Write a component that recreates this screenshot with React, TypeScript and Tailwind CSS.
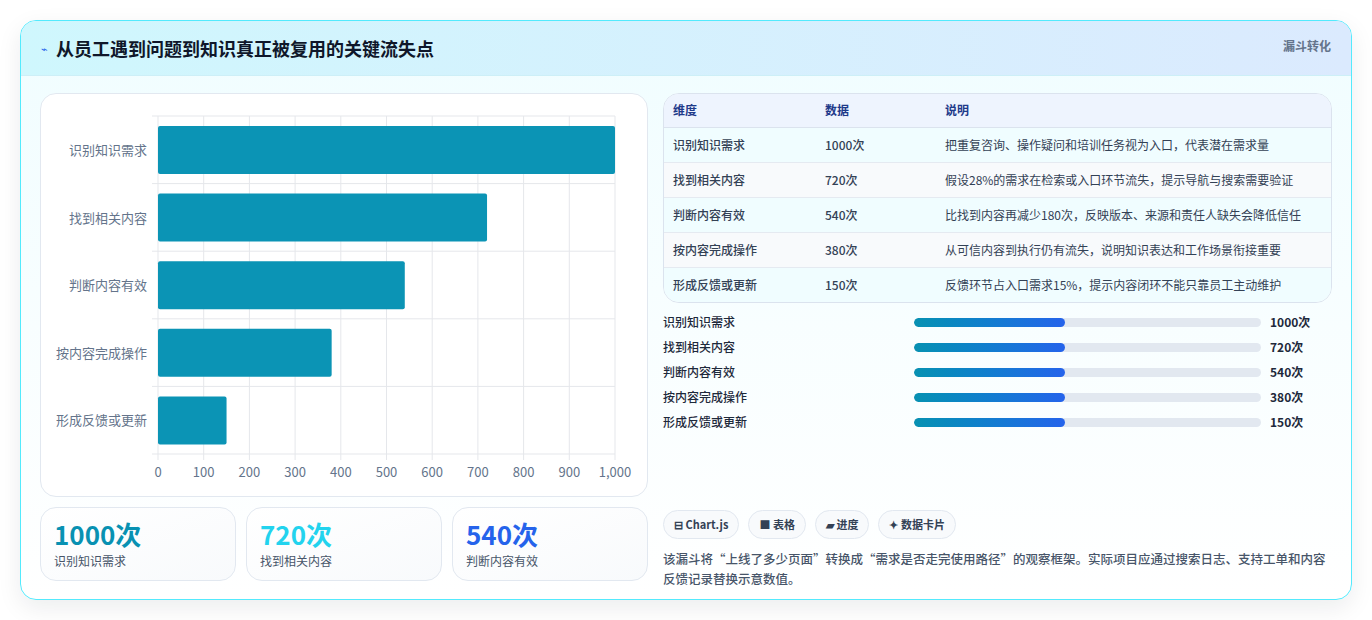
const rows = [
  { name: "识别知识需求", v: 1000, note: "把重复咨询、操作疑问和培训任务视为入口，代表潜在需求量" },
  { name: "找到相关内容", v: 720, note: "假设28%的需求在检索或入口环节流失，提示导航与搜索需要验证" },
  { name: "判断内容有效", v: 540, note: "比找到内容再减少180次，反映版本、来源和责任人缺失会降低信任" },
  { name: "按内容完成操作", v: 380, note: "从可信内容到执行仍有流失，说明知识表达和工作场景衔接重要" },
  { name: "形成反馈或更新", v: 150, note: "反馈环节占入口需求15%，提示内容闭环不能只靠员工主动维护" },
];

const font = { fontFamily: '"Noto Sans CJK SC", "Noto Sans", sans-serif' };

const Chart = () => {
  const L = 117, R = 574, T = 22, B = 360;
  const W = R - L;
  const band = (B - T) / 5;
  return (
    <svg width="607" height="403" className="block">
      {Array.from({ length: 11 }).map((_, i) => {
        const x = L + (W * i) / 10;
        return (
          <g key={i}>
            <line x1={x} y1={T} x2={x} y2={B + 6} stroke="#e5e7eb" />
            <text x={x} y={383} textAnchor="middle" fontSize="13" fill="#64748b">
              {i === 10 ? "1,000" : i * 100}
            </text>
          </g>
        );
      })}
      {Array.from({ length: 6 }).map((_, i) => (
        <line key={i} x1={L - 6} x2={R} y1={T + band * i} y2={T + band * i} stroke="#e5e7eb" />
      ))}
      {rows.map((r, i) => {
        const y = T + band * i + 10;
        return (
          <g key={r.name}>
            <rect x={L} y={y} width={(W * r.v) / 1000} height={48} rx="2" fill="#0b94b5" />
            <text x={106} y={y + 29} textAnchor="end" fontSize="13" fill="#64748b">{r.name}</text>
          </g>
        );
      })}
    </svg>
  );
};

export default function App() {
  return (
    <div className="w-[1372px] h-[620px] bg-white p-5" style={font}>
      <div className="rounded-2xl border border-cyan-300 overflow-hidden bg-gradient-to-b from-[#f0fdff] to-white shadow-[0_8px_24px_rgba(15,23,42,0.08)] h-[580px]">
        <div className="h-[55px] flex items-center justify-between px-5 bg-gradient-to-r from-[#cff7fd] to-[#dbeafe] border-b border-[#cdeff7]">
          <div className="flex items-center gap-2">
            <span className="text-[#2563eb] text-[11px]">⌁</span>
            <h1 className="text-[18px] font-bold text-[#0f172a]">从员工遇到问题到知识真正被复用的关键流失点</h1>
          </div>
          <span className="text-[12px] font-semibold text-[#64748b] self-start mt-[16px]">漏斗转化</span>
        </div>
        <div className="flex gap-[15px] px-[19px] pt-[17px]">
          <div className="w-[608px] flex flex-col gap-[10px]">
            <div className="rounded-2xl border border-[#e2e8f0] bg-white h-[404px] overflow-hidden">
              <Chart />
            </div>
            <div className="grid grid-cols-3 gap-[10px]">
              {[
                ["1000次", "识别知识需求", "text-[#0891b2]"],
                ["720次", "找到相关内容", "text-[#22d3ee]"],
                ["540次", "判断内容有效", "text-[#2563eb]"],
              ].map(([n, l, c]) => (
                <div key={l} className="rounded-2xl border border-[#e2e8f0] bg-gradient-to-br from-white to-[#f8fafc] h-[74px] px-[13px] pt-[8px]">
                  <div className={`text-[26px] font-bold leading-[36px] ${c}`}>{n}</div>
                  <div className="text-[12px] text-[#475569]">{l}</div>
                </div>
              ))}
            </div>
          </div>
          <div className="flex-1 flex flex-col">
            <div className="rounded-2xl border border-[#dbe3ee] overflow-hidden bg-white">
              <table className="w-full text-[12px] text-[#334155]">
                <thead>
                  <tr className="bg-[#eef4fe] text-[#1e3a8a] h-[33px] border-b border-[#dbe3ee]">
                    <th className="text-left font-semibold pl-[9px] w-[161px]">维度</th>
                    <th className="text-left font-semibold w-[120px]">数据</th>
                    <th className="text-left font-semibold">说明</th>
                  </tr>
                </thead>
                <tbody>
                  {rows.map((r, i) => (
                    <tr key={r.name} className={`h-[35px] ${i < 4 ? "border-b border-[#e5eaf1]" : ""} ${i % 2 ? "bg-[#f8fafc]" : "bg-[#f0fdff]"}`}>
                      <td className="pl-[9px] font-medium">{r.name}</td>
                      <td className="font-medium">{r.v}次</td>
                      <td>{r.note}</td>
                    </tr>
                  ))}
                </tbody>
              </table>
            </div>
            <div className="flex flex-col gap-[9px] mt-[11px]">
              {rows.map((r) => (
                <div key={r.name} className="flex items-center h-[16px] text-[12px]">
                  <span className="w-[251px] font-medium text-[#1e293b]">{r.name}</span>
                  <div className="w-[347px] h-[9px] rounded-full bg-[#e2e8f0] overflow-hidden">
                    <div className="w-[151px] h-full rounded-full bg-gradient-to-r from-[#0891b2] to-[#2563eb]" />
                  </div>
                  <span className="ml-[9px] font-bold text-[#1e293b]">{r.v}次</span>
                </div>
              ))}
            </div>
            <div className="flex gap-[9px] mt-[80px]">
              {["⊟ Chart.js", "■ 表格", "▰ 进度", "✦ 数据卡片"].map((c) => (
                <span key={c} className="h-[29px] px-[10px] rounded-full border border-[#e2e8f0] bg-[#f8fafc] text-[11px] font-semibold text-[#334155] flex items-center">{c}</span>
              ))}
            </div>
            <p className="mt-[10px] text-[12.5px] leading-[20px] text-[#475569] font-medium">
              该漏斗将“上线了多少页面”转换成“需求是否走完使用路径”的观察框架。实际项目应通过搜索日志、支持工单和内容反馈记录替换示意数值。
            </p>
          </div>
        </div>
      </div>
    </div>
  );
}
